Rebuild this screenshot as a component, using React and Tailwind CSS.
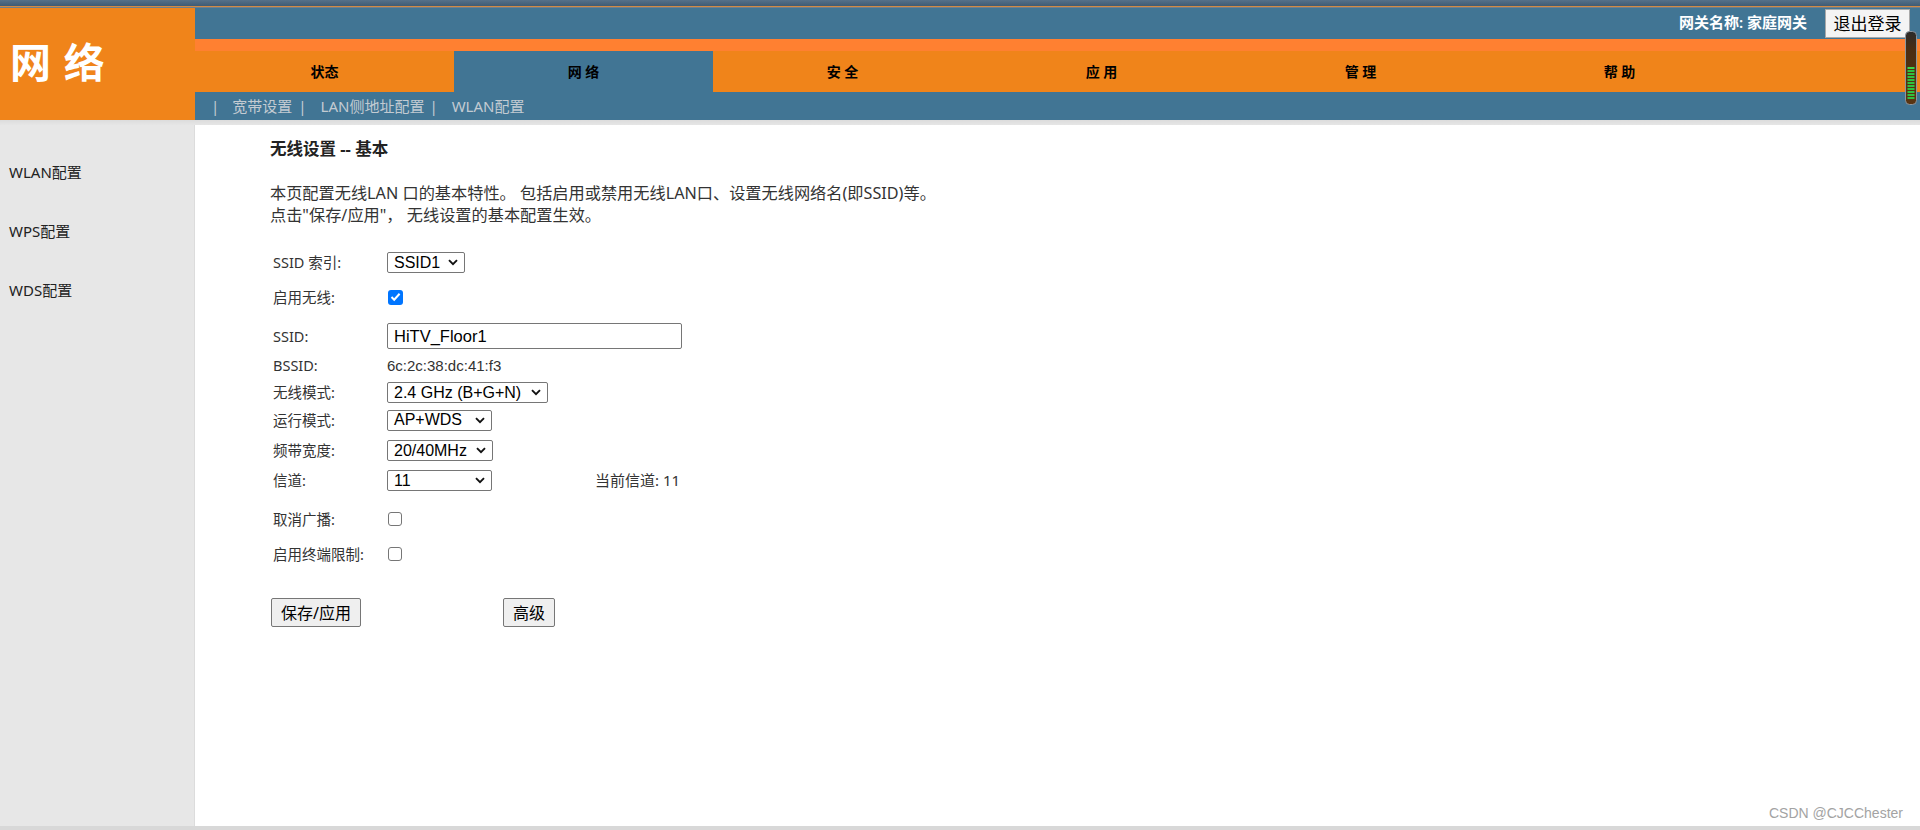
import React from "react";

const SANS = "font-['Noto_Sans','Noto_Sans_CJK_SC',sans-serif]";
const ARIAL = "font-['Liberation_Sans','Noto_Sans_CJK_SC',Arial,sans-serif]";

function Chevron() {
  return (
    <svg width="10" height="7" viewBox="0 0 10 7" className="shrink-0">
      <path d="M1 1.2 L5 5.2 L9 1.2" fill="none" stroke="#111" strokeWidth="1.9" />
    </svg>
  );
}

function Select({ className, children }) {
  return (
    <div
      className={`flex h-[21px] items-center justify-between rounded-[2px] border border-[#767676] bg-white pl-[6px] pr-[6px] text-[16px] leading-none text-black ${ARIAL} ${className}`}
    >
      <span className="whitespace-nowrap">{children}</span>
      <Chevron />
    </div>
  );
}

function Check({ checked }) {
  if (checked) {
    return (
      <div className="flex h-[15px] w-[15px] items-center justify-center rounded-[3px] bg-[#0075ff]">
        <svg width="11" height="10" viewBox="0 0 11 10">
          <path d="M1.5 5 L4.2 7.7 L9.6 1.8" fill="none" stroke="#fff" strokeWidth="2" />
        </svg>
      </div>
    );
  }
  return <div className="h-[14px] w-[14px] rounded-[3px] border border-[#767676] bg-white" />;
}

function Row({ className, label, children }) {
  return (
    <div className={`flex items-center ${className}`}>
      <div className={`ml-[3px] w-[114px] shrink-0 text-[14.5px] leading-none text-[#333] ${SANS}`}>{label}</div>
      {children}
    </div>
  );
}

function Meter() {
  const bars = [];
  for (let i = 0; i < 11; i++) {
    bars.push(<rect key={i} x="2.5" y={36 + i * 3} width="7" height="2" fill={i === 0 ? "#39d94a" : "#2fc23f"} />);
  }
  return (
    <svg width="12" height="74" viewBox="0 0 12 74">
      <defs>
        <linearGradient id="mg" x1="0" y1="0" x2="0" y2="1">
          <stop offset="0" stopColor="#2b2b2b" />
          <stop offset="0.25" stopColor="#4a2d12" />
          <stop offset="1" stopColor="#5a3512" />
        </linearGradient>
      </defs>
      <rect x="0.5" y="0.5" width="11" height="73" rx="4" fill="url(#mg)" stroke="#8c97a0" />
      {bars}
    </svg>
  );
}

const tabs = ["状态", "网 络", "安 全", "应 用", "管 理", "帮 助"];

export default function App() {
  return (
    <div className={`relative flex h-[830px] w-[1920px] flex-col overflow-hidden bg-white ${SANS}`}>
      {/* top strip */}
      <div className="h-[6px] w-full bg-gradient-to-b from-[#55718a] to-[#3f5b74]" />
      <div className="h-[1px] w-full bg-[#d18a45]" />
      <div className="h-[1px] w-full bg-[#6f7f8c]" />

      {/* header */}
      <div className="flex h-[112px] w-full">
        <div className="flex w-[195px] shrink-0 items-center bg-[#f0841a] pl-[10px] pb-[4px]">
          <span className="text-[41px] font-bold leading-none tracking-[1px] text-white">网 络</span>
        </div>
        <div className="flex flex-1 flex-col">
          <div className="flex h-[31px] items-start justify-end bg-[#417594]">
            <span className="mt-[7px] mr-[18px] text-[15px] font-semibold leading-[15px] text-white">网关名称: 家庭网关</span>
            <div className="mt-[1px] mr-[10px] flex h-[29px] w-[85px] items-center justify-center border border-[#a9a9a9] bg-[#f4f4f4] text-[17px] leading-none text-black">
              退出登录
            </div>
          </div>
          <div className="h-[12px] bg-[#ff8031]" />
          <div className="flex h-[41px] bg-[#f0841a]">
            {tabs.map((t, i) => (
              <div
                key={t}
                className={`flex w-[259px] items-center justify-center text-[14px] font-bold leading-none text-black ${i === 1 ? "bg-[#417594]" : "bg-[#f0841a]"}`}
              >
                {t}
              </div>
            ))}
            <div className="flex-1" />
          </div>
          <div className="flex h-[28px] items-center bg-[#417594] pl-[16px] text-[15px] leading-none text-[#c3cbd2]">
            <span>|</span>
            <span className="ml-[13px]">宽带设置</span>
            <span className="ml-[6px]">|</span>
            <span className="ml-[14px]">LAN侧地址配置</span>
            <span className="ml-[5px]">|</span>
            <span className="ml-[14px]">WLAN配置</span>
          </div>
        </div>
      </div>

      {/* separator */}
      <div className="h-[5px] w-full bg-gradient-to-b from-[#dcdcdc] to-[#e6e6e6]" />

      {/* main */}
      <div className="flex h-[701px] w-full">
        <div className="flex w-[195px] shrink-0 flex-col border-r border-[#dcdcdc] bg-[#e7e7e7] pl-[9px] text-[15px] leading-none text-[#222]">
          <div className="mt-[40px]">WLAN配置</div>
          <div className="mt-[44px]">WPS配置</div>
          <div className="mt-[44px]">WDS配置</div>
        </div>
        <div className="flex flex-1 flex-col pl-[75px] pt-[14px]">
          <div className="h-[20px] text-[16.5px] font-bold leading-[20px] text-[#222]">无线设置 -- 基本</div>
          <div className="mt-[23px] text-[16.2px] leading-[22px] text-[#333]">
            <div>本页配置无线LAN 口的基本特性。 包括启用或禁用无线LAN口、设置无线网络名(即SSID)等。</div>
            <div>点击"保存/应用"， 无线设置的基本配置生效。</div>
          </div>

          <Row className="mt-[24px] h-[25px]" label="SSID 索引:">
            <Select className="w-[78px]">SSID1</Select>
          </Row>
          <Row className="mt-[10px] h-[24px]" label="启用无线:">
            <div className="ml-[1px]"><Check checked /></div>
          </Row>
          <Row className="mt-[13px] h-[28px]" label="SSID:">
            <div className={`flex h-[26px] w-[295px] items-center rounded-[2px] border border-[#767676] bg-white pl-[6px] text-[16.5px] leading-none text-black ${ARIAL}`}>
              HiTV_Floor1
            </div>
          </Row>
          <Row className="mt-[3px] h-[24px]" label="BSSID:">
            <span className={`text-[15px] leading-none text-[#333] ${ARIAL}`}>6c:2c:38:dc:41:f3</span>
          </Row>
          <Row className="mt-[3px] h-[25px]" label="无线模式:">
            <Select className="w-[161px]">2.4 GHz (B+G+N)</Select>
          </Row>
          <Row className="mt-[3px] h-[24px]" label="运行模式:">
            <Select className="w-[105px]">AP+WDS</Select>
          </Row>
          <Row className="mt-[6px] h-[25px]" label="频带宽度:">
            <Select className="w-[106px]">20/40MHz</Select>
          </Row>
          <Row className="mt-[5px] h-[25px]" label="信道:">
            <Select className="w-[105px]">11</Select>
            <span className={`ml-[103px] text-[15px] leading-none text-[#333] ${SANS}`}>当前信道: 11</span>
          </Row>
          <Row className="mt-[14px] h-[24px]" label="取消广播:">
            <div className="ml-[1px]"><Check /></div>
          </Row>
          <Row className="mt-[11px] h-[24px]" label="启用终端限制:">
            <div className="ml-[1px]"><Check /></div>
          </Row>

          <div className="mt-[32px] flex items-center">
            <div className="ml-[1px] flex h-[29px] w-[90px] items-center justify-center rounded-[2px] border border-[#767676] bg-[#efefef] text-[16px] leading-none text-black">
              保存/应用
            </div>
            <div className="ml-[142px] flex h-[29px] w-[52px] items-center justify-center rounded-[2px] border border-[#767676] bg-[#efefef] text-[16px] leading-none text-black">
              高级
            </div>
          </div>
        </div>
      </div>

      {/* bottom bar */}
      <div className="h-[4px] w-full bg-[#d8d8d8]" />

      {/* overlays */}
      <div className="absolute right-[3px] top-[31px]">
        <Meter />
      </div>
      <div className={`absolute right-[17px] top-[806px] text-[14px] leading-none text-[#a3a3a3] ${ARIAL}`}>CSDN @CJCChester</div>
    </div>
  );
}
